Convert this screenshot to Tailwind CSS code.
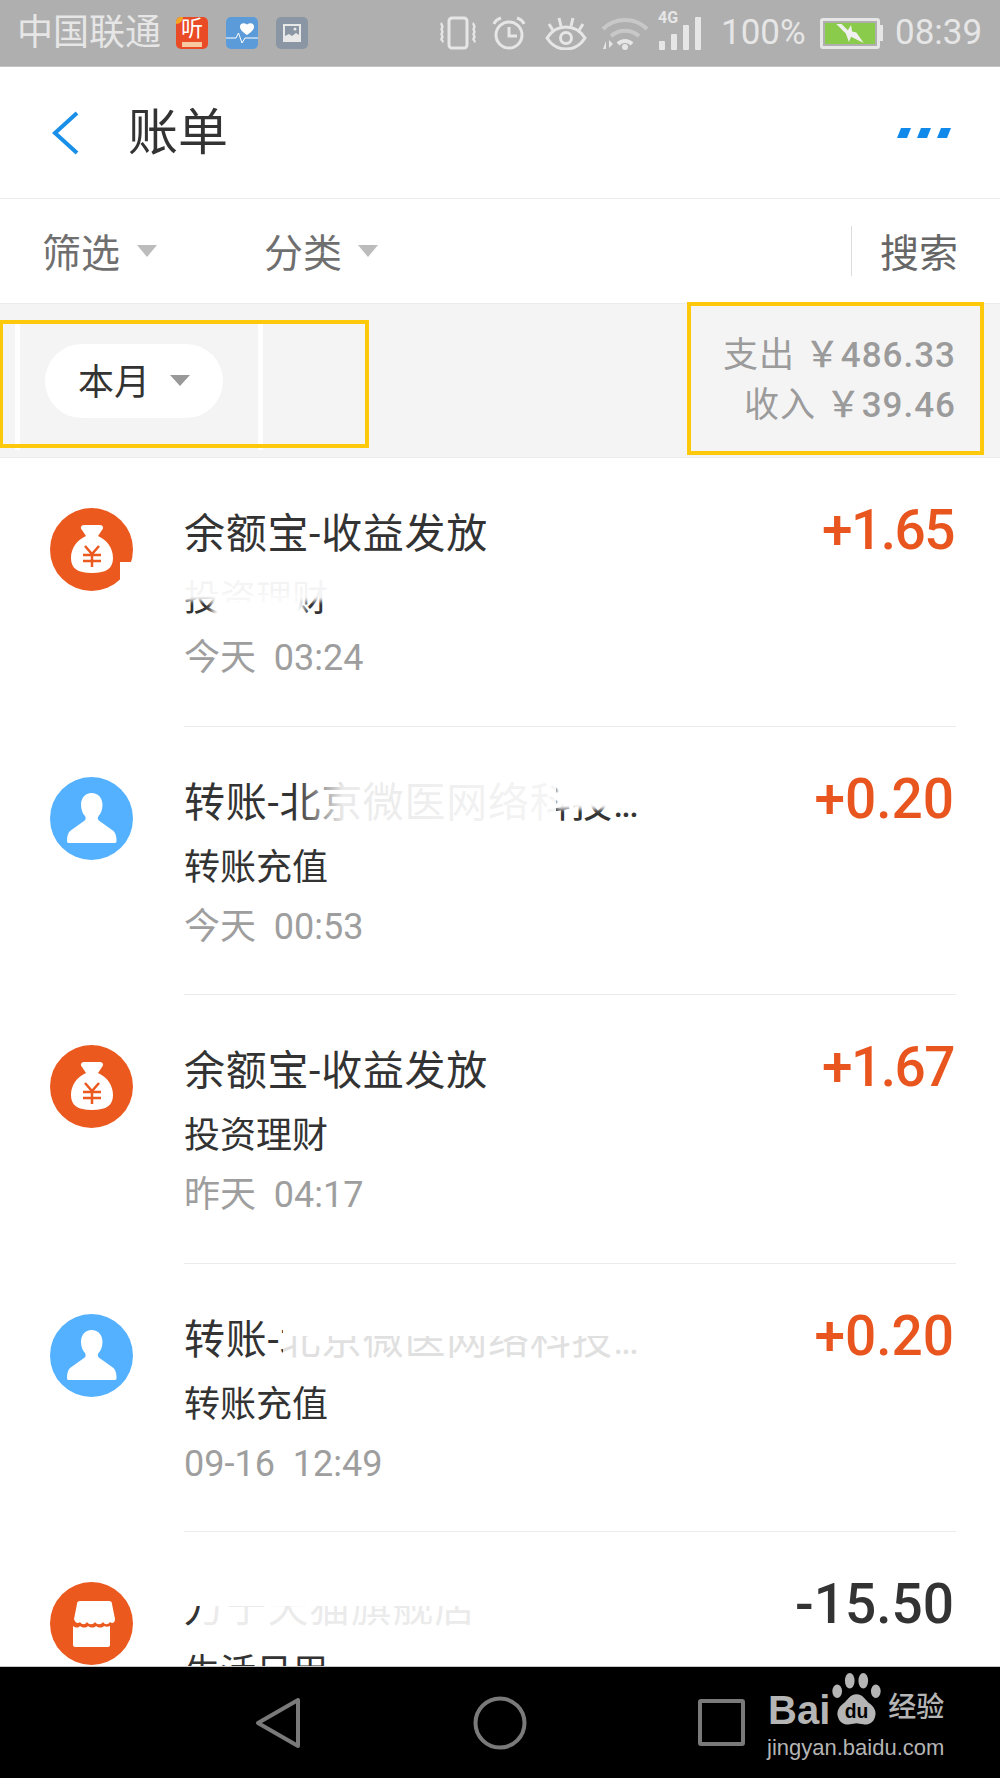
<!doctype html>
<html>

<head>
    <meta charset="UTF-8">
    <meta name="viewport" content="width=device-width, initial-scale=1.0">
    <script src="https://cdn.jsdelivr.net/npm/@tailwindcss/browser@4"></script>
</head>

<body class="[font-family:Roboto,'Noto_Sans_CJK_SC',sans-serif]">
    <div class="relative w-[1000px] h-[1778px] overflow-hidden flex flex-col bg-white">

        <!-- status bar -->
        <div class="h-[67px] shrink-0 bg-[#afafaf] border-b border-[#c4c4c4] flex items-center text-[#e6e6e6]">
            <span class="ml-[17px] w-[143px] text-[36px] leading-[40px] whitespace-nowrap">中国联通</span>
            <div class="ml-[16px] relative w-[32px] h-[32px] rounded-[5px] bg-[#ea4b27] flex justify-center overflow-hidden">
                <span class="text-white text-[22px] leading-[24px]">听</span>
                <div class="absolute bottom-[2px] left-[6px] w-[20px] h-[5px] bg-[#f8c9a0]"></div>
                <div class="absolute top-0 left-0 w-[7px] h-[7px] rounded-br-full bg-[#f5a623]"></div>
            </div>
            <div class="ml-[18px] w-[32px] h-[32px] rounded-[5px] bg-[#5b9bd9] overflow-hidden">
                <svg viewBox="0 0 32 32" class="w-full h-full" fill="none">
                    <path d="M0 21h10l2.500-5 3.500 10 3-5h13" stroke="#fff" stroke-width="1" />
                    <path d="M21 18c-4-3-7-5-7-8.500 0-2.500 3-4.500 7-2 4-2.500 7-.5 7 2 0 3.500-3 5.500-7 8.500z" fill="#fff" />
                </svg>
            </div>
            <div class="ml-[18px] w-[32px] h-[32px] rounded-[5px] bg-[#8a96a3] flex items-center justify-center">
                <svg viewBox="0 0 18 18" class="w-[18px] h-[18px]">
                    <path d="M0 0h18v18H0z" fill="#e8e8e8" />
                    <path d="M2 2h14v9l-3-2-4 3-3-2-4 2z" fill="#8a96a3" />
                    <circle cx="12" cy="5" r="1.500" fill="#e8e8e8" />
                </svg>
            </div>

            <!-- right side icons -->
            <svg viewBox="0 0 38 34" class="ml-[131px] w-[38px] h-[34px]" fill="none" stroke="#e6e6e6" stroke-width="3">
                <rect x="10" y="2" width="18" height="30" rx="3" />
                <path d="M3 7c-2 2 2 3 0 5s2 3 0 5 2 3 0 5 2 3 0 4M35 7c-2 2 2 3 0 5s2 3 0 5 2 3 0 5 2 3 0 4" stroke-width="2.500" />
            </svg>
            <svg viewBox="0 0 34 34" class="ml-[15px] w-[34px] h-[34px]" fill="none" stroke="#e6e6e6" stroke-width="3">
                <circle cx="17" cy="19" r="13" />
                <path d="M17 11v9h8M2 8c1-3 4-5 7-6M32 8c-1-3-4-5-7-6" />
            </svg>
            <svg viewBox="0 0 42 34" class="ml-[19px] w-[42px] h-[34px]" fill="none" stroke="#e6e6e6" stroke-width="3">
                <path d="M2 22c5-8 12-11 19-11s14 3 19 11c-5 8-12 11-19 11S7 30 2 22z" />
                <circle cx="21" cy="22" r="5.500" />
                <path d="M4 8l5 8M14 2l2 8M28 2l-2 8M38 8l-5 8" />
            </svg>
            <svg viewBox="0 0 48 34" class="ml-[14px] w-[48px] h-[34px]" fill="none">
                <path d="M2 13C14 1 34 1 46 13" stroke="#c8c8c8" stroke-width="4" />
                <path d="M10 20c8-7 20-7 28 0" stroke="#c8c8c8" stroke-width="4" />
                <path d="M17 28c4-4 10-4 14 0" stroke="#e6e6e6" stroke-width="4" />
                <circle cx="24" cy="31" r="3" fill="#e6e6e6" />
                <path d="M2 33l3-8v8zM8 24v8l4-4z" fill="#e6e6e6" />
            </svg>
            <div class="relative ml-[9px] w-[47px] h-[34px]">
                <span class="absolute left-0 -top-[6px] text-[16px] leading-[16px] font-bold">4G</span>
                <div class="absolute bottom-0 left-[1px] w-full flex items-end gap-[6px]">
                    <div class="w-[6px] h-[9px] rounded-[1px] bg-[#e6e6e6]"></div>
                    <div class="w-[6px] h-[16px] rounded-[1px] bg-[#e6e6e6]"></div>
                    <div class="w-[6px] h-[25px] rounded-[1px] bg-[#e6e6e6]"></div>
                    <div class="w-[6px] h-[33px] rounded-[1px] bg-[#e6e6e6]"></div>
                </div>
            </div>
            <span class="ml-[16px] w-[87px] text-[35px] leading-[40px] whitespace-nowrap">100%</span>
            <div class="ml-[12px] flex items-center">
                <div class="relative w-[60px] h-[31px] rounded-[3px] border-[3px] border-[#e6e6e6] p-[2px]">
                    <div class="w-full h-full bg-[#8bcb4b] flex items-center justify-center">
                        <svg viewBox="0 0 28 18" class="w-[30px] h-[19px]">
                            <path d="M1 0h5l6 6 3-5 1 6 4 1 7 10-12-6-2 5-3-8z" fill="#f0f0f0" />
                        </svg>
                    </div>
                </div>
                <div class="w-[3px] h-[16px] bg-[#e6e6e6]"></div>
            </div>
            <span class="ml-[12px] text-[35px] leading-[40px] whitespace-nowrap">08:39</span>
        </div>

        <!-- title bar -->
        <div class="h-[132px] shrink-0 border-b border-[#ededed] flex items-center justify-between pl-[51px] pr-[44px]">
            <div class="flex items-center">
                <svg viewBox="0 0 28 44" class="w-[28px] h-[44px]" fill="none" stroke="#1a8fe8" stroke-width="4">
                    <path d="M26 2L4 22l22 20" />
                </svg>
                <span class="ml-[49px] pt-[1px] text-[50px] leading-[56px] text-[#333]">账单</span>
            </div>
            <svg viewBox="0 0 58 10" class="w-[60px] h-[10px]" fill="#1089ea">
                <path d="M4 0h10l-4 10H0zM24 0h10l-4 10H20zM44 0h10l-4 10H40z" />
            </svg>
        </div>

        <!-- filters -->
        <div class="h-[105px] shrink-0 flex items-center border-b border-[#ececec] text-[39px] leading-[44px] text-[#6f6f6f]">
            <span class="ml-[42px] pt-[6px]">筛选</span>
            <div class="ml-[17px] w-0 h-0 border-x-[10px] border-x-transparent border-t-[12px] border-t-[#bcbcbc]"></div>
            <span class="ml-[107px] pt-[6px]">分类</span>
            <div class="ml-[16px] w-0 h-0 border-x-[10px] border-x-transparent border-t-[12px] border-t-[#bcbcbc]"></div>
            <div class="ml-auto w-px h-[50px] bg-[#dcdcdc]"></div>
            <span class="ml-[28px] mr-[42px] pt-[6px] text-[#666]">搜索</span>
        </div>

        <!-- month band -->
        <div class="relative h-[154px] shrink-0 bg-[#f4f4f4] border-b border-[#ececec] flex items-center justify-between pl-[45px] pr-[44px]">
            <div class="h-[74px] w-[178px] rounded-full bg-white flex items-center pl-[33px] text-[36px] text-[#333]">
                <span class="pt-[4px]">本月</span>
                <div class="ml-[20px] w-0 h-0 border-x-[10px] border-x-transparent border-t-[11px] border-t-[#999]"></div>
            </div>
            <div class="text-right text-[35px] leading-[50px] text-[#9b9b9b] tracking-[1px] font-medium">
                <div><span class="font-normal">支出</span> ￥486.33</div>
                <div><span class="font-normal">收入</span> ￥39.46</div>
            </div>
        </div>

        <!-- bills -->
        <div class="flex-1 overflow-hidden">

            <div class="relative h-[268.5px] flex pl-[50px] pr-[44px]">
                <svg viewBox="0 0 83 83" class="mt-[50px] w-[83px] h-[83px] shrink-0">
                    <circle cx="41.500" cy="41.500" r="41.500" fill="#eb591f" />
                    <path d="M34 17h16c3 0 4 3 2 5l-4 6c9 4 15 12 15 22 0 10-6 15-21 15S21 60 21 50c0-10 6-18 15-22l-4-6c-2-2-1-5 2-5z" fill="#fff" />
                    <path d="M35 38l7 8 7-8M33 47h18M33 53h18M42 46v13" fill="none" stroke="#eb591f" stroke-width="2.500" />
                </svg>
                <div class="ml-[51px] flex-1 border-b border-[#ececec] flex justify-between">
                    <div class="pt-[48px]">
                        <div class="text-[41px] leading-[56px] tracking-[0.7px] text-[#333]">余额宝-收益发放</div>
                        <div class="mt-[6px] text-[36px] leading-[62px] text-[#333]">投资理财</div>
                        <div class="text-[36px] leading-[56px] text-[#9e9e9e]">今天&nbsp;&nbsp;03:24</div>
                    </div>
                    <div class="pt-[38px] mr-[2px] text-[55px] leading-[68px] font-medium text-[#e9551f] tracking-[-1.500px]">+1.65</div>
                </div>
                <div class="absolute left-[120px] top-[104px] w-[30px] h-[40px] bg-white"></div>
                <div class="absolute left-[150px] top-[106px] w-[240px] h-[37px] bg-white/95 blur-[2px]"></div>
                <div class="absolute left-[212px] top-[138px] w-[92px] h-[30px] bg-white blur-[3px]"></div>
            </div>

            <div class="relative h-[268.5px] flex pl-[50px] pr-[44px]">
                <svg viewBox="0 0 83 83" class="mt-[50px] w-[83px] h-[83px] shrink-0">
                    <circle cx="41.500" cy="41.500" r="41.500" fill="#53b1ff" />
                    <path d="M41.500 16c7 0 11 5 11 12 0 5-2 9-4 11-1 2-1 4 1 5l14 10c2 2 3 5 3 10 0 2-1 2-3 2H20c-2 0-3 0-3-2 0-5 1-8 3-10l14-10c2-1 2-3 1-5-2-2-4-6-4-11 0-7 4-12 10.500-12z" fill="#fff" />
                </svg>
                <div class="ml-[51px] flex-1 border-b border-[#ececec] flex justify-between">
                    <div class="pt-[48px]">
                        <div class="text-[41px] leading-[56px] tracking-[0.7px] text-[#333] whitespace-nowrap">转账-北京微医网络科技<span class="tracking-[-3px]">...</span></div>
                        <div class="mt-[6px] text-[36px] leading-[62px] text-[#333]">转账充值</div>
                        <div class="text-[36px] leading-[56px] text-[#9e9e9e]">今天&nbsp;&nbsp;00:53</div>
                    </div>
                    <div class="pt-[38px] mr-[2px] text-[55px] leading-[68px] font-medium text-[#e9551f]">+0.20</div>
                </div>
                <div class="absolute left-[296px] top-[44px] w-[260px] h-[66px] bg-linear-to-r from-transparent via-white/90 to-white/95 via-[18%]"></div>
                <div class="absolute left-[556px] top-[44px] w-[90px] h-[38px] bg-white blur-[2px]"></div>
            </div>

            <div class="relative h-[268.5px] flex pl-[50px] pr-[44px]">
                <svg viewBox="0 0 83 83" class="mt-[50px] w-[83px] h-[83px] shrink-0">
                    <circle cx="41.500" cy="41.500" r="41.500" fill="#eb591f" />
                    <path d="M34 17h16c3 0 4 3 2 5l-4 6c9 4 15 12 15 22 0 10-6 15-21 15S21 60 21 50c0-10 6-18 15-22l-4-6c-2-2-1-5 2-5z" fill="#fff" />
                    <path d="M35 38l7 8 7-8M33 47h18M33 53h18M42 46v13" fill="none" stroke="#eb591f" stroke-width="2.500" />
                </svg>
                <div class="ml-[51px] flex-1 border-b border-[#ececec] flex justify-between">
                    <div class="pt-[48px]">
                        <div class="text-[41px] leading-[56px] tracking-[0.7px] text-[#333]">余额宝-收益发放</div>
                        <div class="mt-[6px] text-[36px] leading-[62px] text-[#333]">投资理财</div>
                        <div class="text-[36px] leading-[56px] text-[#9e9e9e]">昨天&nbsp;&nbsp;04:17</div>
                    </div>
                    <div class="pt-[38px] mr-[2px] text-[55px] leading-[68px] font-medium text-[#e9551f] tracking-[-1.500px]">+1.67</div>
                </div>
            </div>

            <div class="relative h-[268.5px] flex pl-[50px] pr-[44px]">
                <svg viewBox="0 0 83 83" class="mt-[50px] w-[83px] h-[83px] shrink-0">
                    <circle cx="41.500" cy="41.500" r="41.500" fill="#53b1ff" />
                    <path d="M41.500 16c7 0 11 5 11 12 0 5-2 9-4 11-1 2-1 4 1 5l14 10c2 2 3 5 3 10 0 2-1 2-3 2H20c-2 0-3 0-3-2 0-5 1-8 3-10l14-10c2-1 2-3 1-5-2-2-4-6-4-11 0-7 4-12 10.500-12z" fill="#fff" />
                </svg>
                <div class="ml-[51px] flex-1 border-b border-[#ececec] flex justify-between">
                    <div class="pt-[48px]">
                        <div class="text-[41px] leading-[56px] tracking-[0.7px] text-[#333] whitespace-nowrap">转账-北京微医网络科技<span class="tracking-[-3px]">...</span></div>
                        <div class="mt-[6px] text-[36px] leading-[62px] text-[#333]">转账充值</div>
                        <div class="text-[36px] leading-[56px] text-[#9e9e9e]">09-16&nbsp;&nbsp;12:49</div>
                    </div>
                    <div class="pt-[38px] mr-[2px] text-[55px] leading-[68px] font-medium text-[#e9551f]">+0.20</div>
                </div>
                <div class="absolute left-[283px] top-[40px] w-[380px] h-[32px] bg-white"></div>
                <div class="absolute left-[283px] top-[72px] w-[380px] h-[36px] bg-white/85"></div>
            </div>

            <div class="relative h-[268.5px] flex pl-[50px] pr-[44px]">
                <svg viewBox="0 0 83 83" class="mt-[50px] w-[83px] h-[83px] shrink-0">
                    <circle cx="41.500" cy="41.500" r="41.500" fill="#eb591f" />
                    <path d="M24 19h35c2 0 3 1 3 3l3 15c0 4-3 5-5 3-2 3-5 3-7 0-2 3-6 3-8 0-2 3-6 3-8 0-2 3-5 3-7 0-2 2-5 1-6-3l3-15c0-2 1-3 3-3z" fill="#fff" />
                    <path d="M23 44c3 2 5 2 7 0 3 2 6 2 8 0 3 2 6 2 8 0 3 2 6 2 8 0 2 1 4 1 6 0v19c0 1-1 2-2 2H25c-1 0-2-1-2-2z" fill="#fff" />
                </svg>
                <div class="ml-[51px] flex-1 flex justify-between">
                    <div class="pt-[48px]">
                        <div class="text-[41px] leading-[56px] tracking-[0.7px] text-[#333] whitespace-nowrap">万宁天猫旗舰店</div>
                        <div class="mt-[6px] text-[36px] leading-[62px] text-[#333]">生活日用</div>
                    </div>
                    <div class="pt-[38px] mr-[2px] text-[55px] leading-[68px] font-medium text-[#333]">-15.50</div>
                </div>
                <div class="absolute left-[180px] top-[40px] w-[480px] h-[34px] bg-white"></div>
                <div class="absolute left-[200px] top-[74px] w-[460px] h-[34px] bg-white/90"></div>
            </div>
        </div>

        <!-- nav bar -->
        <div class="relative h-[112px] shrink-0 bg-black border-t border-[#c8c8c8] flex items-center">
            <svg viewBox="0 0 46 52" class="ml-[255px] w-[46px] h-[52px]" fill="none" stroke="#7a7a7a" stroke-width="4" stroke-linejoin="round">
                <path d="M43 3v46L3 26z" />
            </svg>
            <svg viewBox="0 0 54 54" class="ml-[172px] w-[54px] h-[54px]" fill="none" stroke="#7a7a7a" stroke-width="4">
                <circle cx="27" cy="27" r="24.500" />
            </svg>
            <div class="ml-[171px] w-[47px] h-[47px] rounded-[3px] border-[4px] border-[#7a7a7a]"></div>

            <!-- baidu jingyan watermark -->
            <div class="absolute left-[768px] top-[5px] w-[180px] text-[#b5b5b5]">
                <div class="flex items-end h-[56px]">
                    <span class="text-[40px] leading-[36px] font-bold [font-family:'Liberation_Sans',sans-serif]">Bai</span>
                    <svg viewBox="0 0 52 58" class="w-[53px] h-[56px] shrink-0" fill="#b5b5b5">
                        <ellipse cx="6" cy="20" rx="5" ry="7" />
                        <ellipse cx="19" cy="9" rx="5" ry="8" />
                        <ellipse cx="33" cy="9" rx="5" ry="8" />
                        <ellipse cx="46" cy="20" rx="5" ry="7" />
                        <path d="M26 23c7 0 9 6 14 10 5 4 7 9 5 14-2 6-7 8-12 7-3 0-5-1-7-1s-4 1-7 1c-5 1-10-1-12-7-2-5 0-10 5-14 5-4 7-10 14-10z" />
                        <text x="26" y="48" text-anchor="middle" font-size="20" font-weight="700" fill="#000" font-family="Liberation Sans">du</text>
                    </svg>
                    <span class="ml-[5px] mb-[3px] text-[28px] leading-[34px] font-medium whitespace-nowrap">经验</span>
                </div>
                <div class="mt-[6px] -ml-[1px] text-[22px] leading-[28px] whitespace-nowrap [font-family:'Liberation_Sans',sans-serif]">jingyan.baidu.com</div>
            </div>
        </div>

        <!-- yellow annotation boxes -->
        <div class="absolute left-[15px] top-[321px] w-[5px] h-[129px] bg-white/90"></div>
        <div class="absolute left-[258px] top-[321px] w-[5px] h-[129px] bg-white/90"></div>
        <div class="absolute -left-[1px] top-[320px] w-[370px] h-[128px] border-[4px] border-[#fdc90a]"></div>
        <div class="absolute left-[687px] top-[302px] w-[297px] h-[153px] border-[4px] border-[#fdc90a]"></div>
    </div>
</body>

</html>
